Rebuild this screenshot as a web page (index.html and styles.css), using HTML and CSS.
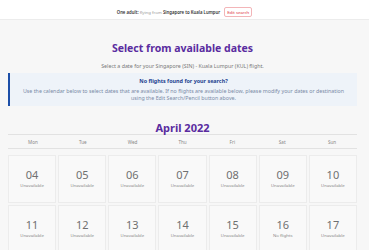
FILE: index.html
```html
<!DOCTYPE html>
<html>
<head>
<meta charset="utf-8">
<link rel="stylesheet" href="styles.css">
</head>
<body>
<header class="topbar">
  <span class="summary"><b>One adult:</b> <span class="muted">flying from</span> <b>Singapore to Kuala Lumpur</b></span>
  <span class="edit">Edit search</span>
</header>
<main class="page">
  <h1 class="title">Select from available dates</h1>
  <p class="subtitle">Select a date for your Singapore (SIN) - Kuala Lumpur (KUL) flight.</p>
  <div class="alert">
    <div class="alert-title">No flights found for your search?</div>
    <div class="alert-body">Use the calendar below to select dates that are available. If no flights are available below, please modify your dates or destination using the Edit Search/Pencil button above.</div>
  </div>
  <h2 class="month">April 2022</h2>
  <div class="weekdays">
    <span>Mon</span><span>Tue</span><span>Wed</span><span>Thu</span><span>Fri</span><span>Sat</span><span>Sun</span>
  </div>
  <div class="grid">
    <div class="cell"><span class="num">04</span><span class="lbl">Unavailable</span></div>
    <div class="cell"><span class="num">05</span><span class="lbl">Unavailable</span></div>
    <div class="cell"><span class="num">06</span><span class="lbl">Unavailable</span></div>
    <div class="cell"><span class="num">07</span><span class="lbl">Unavailable</span></div>
    <div class="cell"><span class="num">08</span><span class="lbl">Unavailable</span></div>
    <div class="cell"><span class="num">09</span><span class="lbl">Unavailable</span></div>
    <div class="cell"><span class="num">10</span><span class="lbl">Unavailable</span></div>
    <div class="cell"><span class="num">11</span><span class="lbl">Unavailable</span></div>
    <div class="cell"><span class="num">12</span><span class="lbl">Unavailable</span></div>
    <div class="cell"><span class="num">13</span><span class="lbl">Unavailable</span></div>
    <div class="cell"><span class="num">14</span><span class="lbl">Unavailable</span></div>
    <div class="cell"><span class="num">15</span><span class="lbl">Unavailable</span></div>
    <div class="cell"><span class="num">16</span><span class="lbl">No flights</span></div>
    <div class="cell"><span class="num">17</span><span class="lbl">Unavailable</span></div>
  </div>
</main>
</body>
</html>
```
FILE: styles.css
```css
* { box-sizing: border-box; }
html, body { margin: 0; padding: 0; }
body {
  background: #f7f7f7;
  font-family: "Noto Sans", "DejaVu Sans", sans-serif;
  color: #555;
  overflow: hidden;
}
.topbar {
  height: 20px;
  background: #fff;
  border-bottom: 1px solid #ececec;
  display: flex;
  align-items: center;
  justify-content: center;
  gap: 4px;
  font-size: 4.3px;
  color: #333;
  padding-left: 0;
  padding-top: 4px;
}
.summary b { font-weight: 600; }
.muted { color: #999; }
.edit {
  color: #e0343d;
  border: 1px solid #f3b5b8;
  border-radius: 2px;
  padding: 1px 2px;
  background: #fff;
}
.page {
  padding: 0 12px 0 8px;
}
.title {
  margin: 22px 0 0;
  text-align: center;
  font-size: 10.5px;
  line-height: 13px;
  font-weight: 700;
  color: #5a2ca0;
}
.subtitle {
  margin: 8px 0 0;
  text-align: center;
  font-size: 5.3px;
  line-height: 7px;
  color: #777;
}
.alert {
  margin-top: 3px;
  background: #eef3f9;
  border-left: 2px solid #1d4fa8;
  padding: 5px 12px 4px;
  text-align: center;
}
.alert-title {
  font-size: 5.4px;
  font-weight: 700;
  color: #1c3f8f;
  line-height: 7px;
}
.alert-body {
  margin-top: 3px;
  font-size: 5.3px;
  line-height: 7px;
  color: #7a8aa6;
}
.month {
  margin: 16px 0 0;
  text-align: center;
  font-size: 11px;
  line-height: 12px;
  font-weight: 700;
  color: #5a2ca0;
}
.weekdays {
  display: grid;
  grid-template-columns: repeat(7, 1fr);
  border-top: 1px solid #e2e2e2;
  border-bottom: 1px solid #e2e2e2;
  height: 15px;
  align-items: center;
  font-size: 4.6px;
  color: #888;
  text-align: center;
}
.grid {
  margin-top: 6px;
  display: grid;
  grid-template-columns: repeat(7, 1fr);
  gap: 2px;
}
.cell {
  height: 48px;
  background: #f9f9f9;
  border: 1px solid #ececec;
  display: flex;
  flex-direction: column;
  align-items: center;
  justify-content: center;
  padding-bottom: 4px;
}
.num {
  font-size: 11px;
  line-height: 15px;
  color: #707070;
}
.lbl {
  font-size: 4.3px;
  line-height: 6px;
  color: #888;
}
```
